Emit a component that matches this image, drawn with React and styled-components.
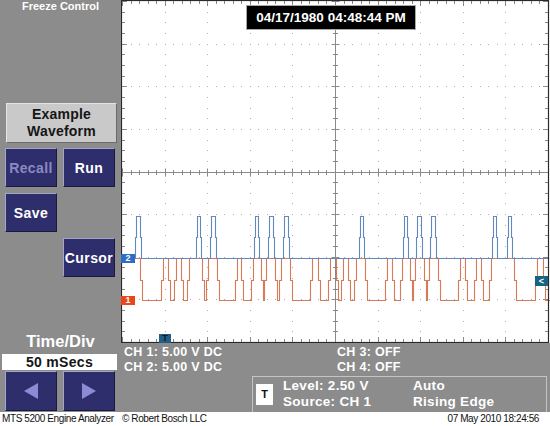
import React from 'react';
import styled, { createGlobalStyle } from 'styled-components';

const GRAY = '#8c8c8c';
const NAVY = '#2e2e6c';
const FONT = '"Liberation Sans", Arial, sans-serif';

const Global = createGlobalStyle`
  html, body { margin: 0; padding: 0; background: #fff; }
  body { font-family: ${FONT}; }
  #root { width: 550px; height: 426px; }
`;

const Screen = styled.div`
  width: 550px;
  height: 426px;
  display: flex;
  flex-direction: column;
  overflow: hidden;
  font-family: ${FONT};
`;

const Main = styled.div`
  display: flex;
  height: 412px;
`;

const Sidebar = styled.div`
  width: 121px;
  flex: none;
  background: ${GRAY};
  display: flex;
  flex-direction: column;
`;

const PanelTitle = styled.div`
  height: 13px;
  padding-top: 1px;
  box-sizing: border-box;
  color: #fff;
  font-weight: bold;
  font-size: 11px;
  line-height: 11px;
  text-align: center;
`;

const Caption = styled.div`
  margin: 90px 4px 0 6px;
  height: 40px;
  box-sizing: border-box;
  background: #c9c9c9;
  border: 1px solid;
  border-color: #e4e4e4 #6a6a6a #6a6a6a #e4e4e4;
  display: flex;
  flex-direction: column;
  justify-content: center;
  align-items: center;
  font-weight: bold;
  font-size: 14px;
  line-height: 17px;
  color: #151515;
  letter-spacing: 0.2px;
`;

const ButtonGrid = styled.div`
  margin-top: 5px;
  padding-left: 5px;
  display: grid;
  grid-template-columns: 52px 52px;
  grid-template-rows: 39px 39px 39px;
  gap: 6px;
`;

const PanelButton = styled.button`
  grid-column: ${(p) => p.$col || 'auto'};
  grid-row: ${(p) => p.$row || 'auto'};
  width: 52px;
  box-sizing: border-box;
  background: ${NAVY};
  border: 1px solid;
  border-color: #a4a4c8 #1a1a3e #1a1a3e #a4a4c8;
  color: ${(p) => (p.$dim ? '#8a8ac2' : '#ffffff')};
  font-family: ${FONT};
  font-weight: bold;
  font-size: 14px;
  letter-spacing: 0.4px;
  padding: 0;
  margin: 0;
  display: flex;
  align-items: center;
  justify-content: center;
`;

const TimeLabel = styled.div`
  margin-top: 54px;
  height: 20px;
  line-height: 20px;
  text-align: center;
  color: #fff;
  font-weight: bold;
  font-size: 16.5px;
`;

const TimeValue = styled.div`
  margin: 3px 4px 0 2px;
  height: 16px;
  background: #fff;
  line-height: 16px;
  text-align: center;
  font-weight: bold;
  font-size: 14px;
  color: #151515;
  letter-spacing: 0.3px;
`;

const ArrowRow = styled.div`
  margin-top: 1px;
  padding-left: 5px;
  display: flex;
  gap: 6px;
`;

const ArrowButton = styled(PanelButton)`
  height: 40px;
`;

const RightColumn = styled.div`
  flex: 1;
  display: flex;
  flex-direction: column;
`;

const Scope = styled.div`
  position: relative;
  height: 343px;
  background: #fff;
  flex: none;
`;

const ScopeSvg = styled.svg`
  display: block;
`;

const DateBox = styled.div`
  position: absolute;
  left: 125px;
  top: 5px;
  width: 170px;
  height: 25px;
  box-sizing: border-box;
  background: #000;
  border: 1px solid #a8a8a8;
  color: #fff;
  font-weight: bold;
  font-size: 13.5px;
  line-height: 23px;
  text-align: center;
`;

const Marker = styled.div`
  position: absolute;
  left: ${(p) => p.$x}px;
  top: ${(p) => p.$y}px;
  width: ${(p) => p.$w}px;
  height: ${(p) => p.$h}px;
  background: ${(p) => p.$bg};
  color: ${(p) => p.$fg || '#fff'};
  font-weight: bold;
  font-size: 9px;
  line-height: ${(p) => p.$h}px;
  text-align: center;
`;

const Info = styled.div`
  flex: 1;
  background: ${GRAY};
  display: flex;
  flex-direction: column;
`;

const Channels = styled.div`
  display: grid;
  grid-template-columns: 213px 1fr;
  grid-auto-rows: 15px;
  padding: 2px 0 0 3px;
  color: #fff;
  font-weight: bold;
  font-size: 12.5px;
  line-height: 15px;
  letter-spacing: 0.3px;
`;

const TriggerBox = styled.div`
  margin: 1px 3px 0 131px;
  height: 36px;
  box-sizing: border-box;
  border: 1px solid #c4c4c4;
  border-bottom: none;
  display: flex;
  align-items: center;
  padding-left: 3px;
  gap: 10px;
`;

const TriggerBadge = styled.div`
  width: 17px;
  height: 21px;
  background: #fff;
  color: #111;
  font-weight: bold;
  font-size: 11px;
  line-height: 21px;
  text-align: center;
`;

const TriggerGrid = styled.div`
  display: grid;
  grid-template-columns: 130px 1fr;
  grid-auto-rows: 16px;
  color: #fff;
  font-weight: bold;
  font-size: 13.5px;
  line-height: 16px;
  letter-spacing: 0.3px;
  margin-top: -2px;
`;

const Footer = styled.div`
  height: 14px;
  display: grid;
  grid-template-columns: 120px 1fr auto;
  align-items: center;
  padding: 0 11px 0 2px;
  background: #fff;
  color: #111;
  font-size: 10px;
  line-height: 14px;
  letter-spacing: -0.4px;
  white-space: nowrap;
`;

/* ---------- scope drawing ---------- */
const W = 429;
const H = 343;
const X0 = 1;
const X1 = 427;
const Y0 = 1;
const Y1 = 342;
const DW = (X1 - X0) / 10;
const DH = (Y1 - Y0) / 8;
const px = (v) => Math.round(v) + 0.5;
const CX = px(X0 + DW * 5);
const CY = px(Y0 + DH * 4);

const OFF = 121;
const RED_LOWS = [
  [140, 163], [168, 176], [181, 189], [202, 208], [217, 237], [241, 253],
  [261, 266], [275, 281], [290, 312], [318, 330], [336, 343], [348, 356],
  [365, 387], [392, 402], [410, 415], [424, 429], [438, 460], [465, 476],
  [481, 491], [514, 537], [543, 570],
];
const BLUE_PULSES = [
  [135, 141], [196, 201], [210, 216], [254, 259], [268, 274], [283, 289],
  [359, 364], [403, 408], [416, 422], [430, 436], [492, 497], [507, 512],
];

function redPath() {
  const HI = 258.5, MID = 280.5, LO = 300.5;
  let d = `M${X0} ${HI}`;
  RED_LOWS.forEach(([ga, gb]) => {
    const a = ga - OFF + 0.5;
    const b = gb - OFF + 0.5;
    d += ` L${a} ${HI} L${a} ${MID} L${a + 2} ${MID} L${a + 2} ${LO} L${b - 2} ${LO} L${b - 2} ${MID} L${b} ${MID} L${b} ${HI}`;
  });
  return d;
}

function bluePath() {
  const BASE = 258.5, MID = 237.5, TOP = 216.5;
  let d = `M${X0} ${BASE}`;
  BLUE_PULSES.forEach(([ga, gb]) => {
    const a = ga - OFF + 0.5;
    const b = gb - OFF + 0.5;
    d += ` L${a} ${BASE} L${a} ${MID} L${a + 1} ${MID} L${a + 1} ${TOP} L${b - 1} ${TOP} L${b - 1} ${MID} L${b} ${MID} L${b} ${BASE}`;
  });
  d += ` L${X1} ${BASE}`;
  return d;
}

function ScopeGrid() {
  let dots = '';
  for (let k = 1; k < 8; k++) {
    if (k === 4) continue;
    const y = Math.round(Y0 + k * DH);
    for (let i = 1; i < 50; i++) {
      const x = Math.round(X0 + (i * DW) / 5);
      dots += `M${x} ${y}h1v1h-1z`;
    }
  }
  for (let k = 1; k < 10; k++) {
    if (k === 5) continue;
    const x = Math.round(X0 + k * DW);
    for (let i = 1; i < 32; i++) {
      const y = Math.round(Y0 + (i * DH) / 4);
      dots += `M${x} ${y}h1v1h-1z`;
    }
  }

  let ticks = '';
  for (let i = 0; i <= 50; i++) {
    const x = px(X0 + (i * DW) / 5);
    const major = i % 5 === 0;
    const len = major ? 4 : 2.5;
    ticks += ` M${x} ${CY - len} L${x} ${CY + len}`;
    ticks += ` M${x} ${Y0} L${x} ${Y0 + (major ? 5 : 3)}`;
    ticks += ` M${x} ${Y1} L${x} ${Y1 - (major ? 5 : 3)}`;
  }
  for (let i = 0; i <= 32; i++) {
    const y = px(Y0 + (i * DH) / 4);
    const major = i % 4 === 0;
    const len = major ? 4 : 2.5;
    ticks += ` M${CX - len} ${y} L${CX + len} ${y}`;
    ticks += ` M${X0} ${y} L${X0 + (major ? 5 : 3)} ${y}`;
    ticks += ` M${X1} ${y} L${X1 - (major ? 5 : 3)} ${y}`;
  }

  return (
    <ScopeSvg width={W} height={H} viewBox={`0 0 ${W} ${H}`}>
      <rect x="0" y="0" width={W} height={H} fill="#fff" />
      <path d={dots} fill="#ababab" />
      <line x1={X0} y1={CY} x2={X1} y2={CY} stroke="#8a8a8a" strokeWidth="1" />
      <line x1={CX} y1={Y0} x2={CX} y2={Y1} stroke="#8a8a8a" strokeWidth="1" />
      <path d={ticks} stroke="#8a8a8a" strokeWidth="1" fill="none" />
      <path d={redPath()} stroke="#d87a58" strokeWidth="1.1" fill="none" strokeLinejoin="miter" />
      <path d={bluePath()} stroke="#6289be" strokeWidth="1.1" fill="none" strokeLinejoin="miter" />
      <rect x="0.5" y="0.5" width={X1} height={Y1} fill="none" stroke="#2a2a2a" strokeWidth="1.2" />
    </ScopeSvg>
  );
}

function Arrow({ dir }) {
  return (
    <svg width="16" height="18" viewBox="0 0 16 18">
      {dir === 'left' ? (
        <polygon points="15,1 15,17 1,9" fill="#8c8cd6" />
      ) : (
        <polygon points="1,1 1,17 15,9" fill="#8c8cd6" />
      )}
    </svg>
  );
}

export default function App() {
  return (
    <>
      <Global />
      <Screen>
        <Main>
          <Sidebar>
            <PanelTitle>Freeze Control</PanelTitle>
            <Caption>
              <span>Example</span>
              <span>Waveform</span>
            </Caption>
            <ButtonGrid>
              <PanelButton $col={1} $row={1} $dim>Recall</PanelButton>
              <PanelButton $col={2} $row={1}>Run</PanelButton>
              <PanelButton $col={1} $row={2}>Save</PanelButton>
              <PanelButton $col={2} $row={3}>Cursor</PanelButton>
            </ButtonGrid>
            <TimeLabel>Time/Div</TimeLabel>
            <TimeValue>50 mSecs</TimeValue>
            <ArrowRow>
              <ArrowButton aria-label="previous"><Arrow dir="left" /></ArrowButton>
              <ArrowButton aria-label="next"><Arrow dir="right" /></ArrowButton>
            </ArrowRow>
          </Sidebar>
          <RightColumn>
            <Scope>
              <ScopeGrid />
              <DateBox>04/17/1980 04:48:44 PM</DateBox>
              <Marker $x={0} $y={254} $w={14} $h={9} $bg="#2f6cc6">2</Marker>
              <Marker $x={0} $y={296} $w={14} $h={9} $bg="#e5481c">1</Marker>
              <Marker $x={414} $y={276} $w={13} $h={10} $bg="#176482">&lt;</Marker>
              <Marker $x={38} $y={334} $w={12} $h={9} $bg="#1f5f86" $fg="#0a1a2a">T</Marker>
            </Scope>
            <Info>
              <Channels>
                <span>CH 1: 5.00 V DC</span>
                <span>CH 3: OFF</span>
                <span>CH 2: 5.00 V DC</span>
                <span>CH 4: OFF</span>
              </Channels>
              <TriggerBox>
                <TriggerBadge>T</TriggerBadge>
                <TriggerGrid>
                  <span>Level: 2.50 V</span>
                  <span>Auto</span>
                  <span>Source: CH 1</span>
                  <span>Rising Edge</span>
                </TriggerGrid>
              </TriggerBox>
            </Info>
          </RightColumn>
        </Main>
        <Footer>
          <span>MTS 5200 Engine Analyzer</span>
          <span>© Robert Bosch LLC</span>
          <span>07 May 2010 18:24:56</span>
        </Footer>
      </Screen>
    </>
  );
}
